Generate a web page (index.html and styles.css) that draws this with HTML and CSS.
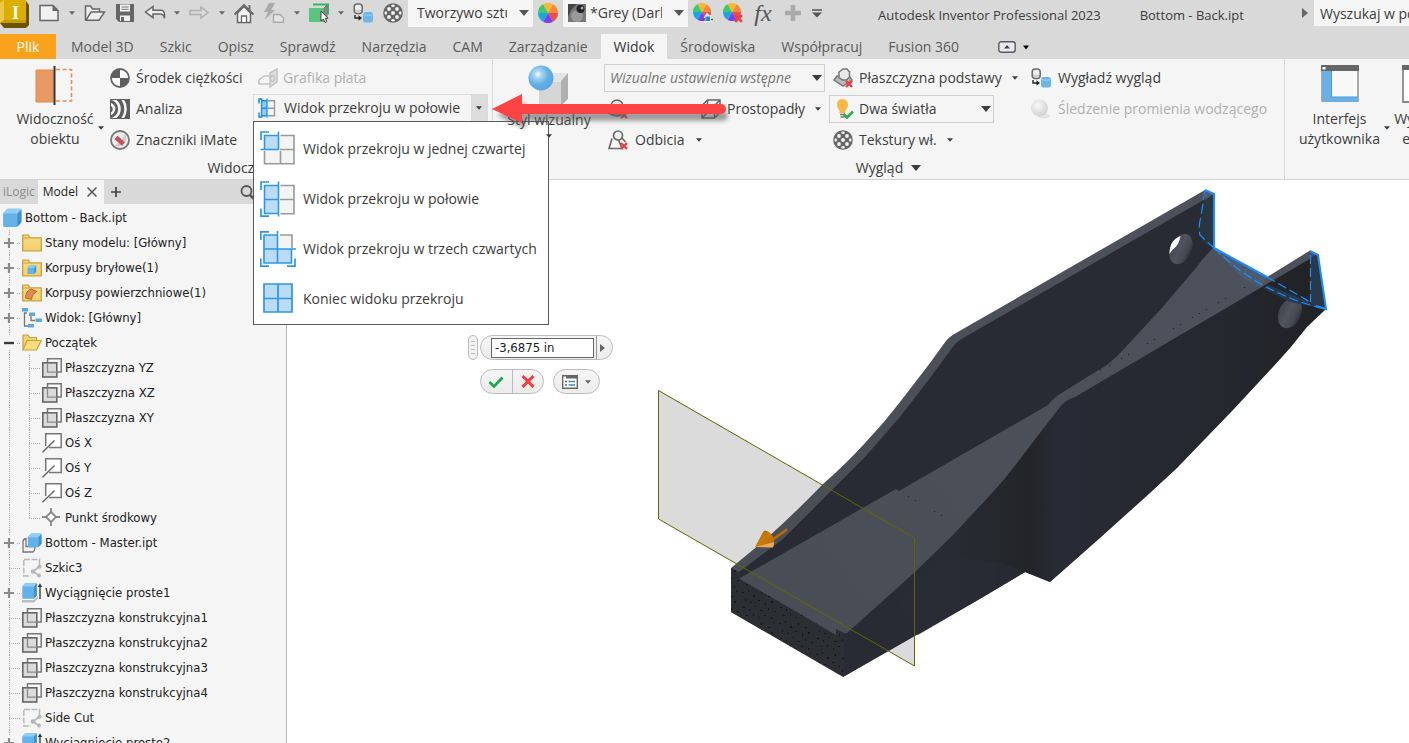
FILE: index.html
```html
<!DOCTYPE html>
<html lang="pl">
<head>
<meta charset="utf-8">
<title>Autodesk Inventor Professional 2023</title>
<link rel="stylesheet" href="styles.css">
</head>
<body>
<svg class="defs" aria-hidden="true">
  <defs>
    <radialGradient id="gBall" cx=".38" cy=".35" r=".7"><stop offset="0" stop-color="#fff"/><stop offset=".2" stop-color="#aad6f5"/><stop offset=".6" stop-color="#62afe6"/><stop offset="1" stop-color="#5aa6df"/></radialGradient>
    <radialGradient id="gGrey" cx=".4" cy=".35" r=".7"><stop offset="0" stop-color="#f8f8f8"/><stop offset="1" stop-color="#cfcfcf"/></radialGradient>
    <linearGradient id="gYel" x1="0" y1="0" x2="0" y2="1"><stop offset="0" stop-color="#f9dc86"/><stop offset="1" stop-color="#f2cf6c"/></linearGradient>
  </defs>
  <symbol id="caret" viewBox="0 0 10 6"><path d="M0 0h10L5 6z"/></symbol>
  <symbol id="redx" viewBox="0 0 8 8"><path d="M1 1l6 6M7 1L1 7" stroke="#f03c3c" stroke-width="2.4" fill="none"/></symbol>
  <symbol id="wheel" viewBox="0 0 20 20">
    <path d="M10 10L5 1.3A10 10 0 0 1 15 1.3z" fill="#fdb62f"/><path d="M10 10L15 1.3A10 10 0 0 1 20 10z" fill="#f58a3c"/>
    <path d="M10 10L20 10A10 10 0 0 1 15 18.7z" fill="#e8504d"/><path d="M10 10L15 18.7A10 10 0 0 1 5 18.7z" fill="#7a3ff2"/>
    <path d="M10 10L5 18.7A10 10 0 0 1 0 10z" fill="#18a8dc"/><path d="M10 10L0 10A10 10 0 0 1 5 1.3z" fill="#3fc870"/>
  </symbol>
  <symbol id="smooth" viewBox="0 0 20 20">
    <rect x="1.2" y="1" width="8" height="9.500" rx="3" fill="#eee" stroke="#6b6b6b" stroke-width="1.500"/><path d="M2 7c2 1.300 5 1.300 7 0" stroke="#6b6b6b" fill="none" opacity=".5"/>
    <path d="M2 12v3h5" stroke="#222" stroke-width="1.400" fill="none"/><path d="M5.500 12.300L9 15l-3.500 2.700z" fill="#222"/>
    <rect x="10" y="9" width="10" height="10.500" rx="2.500" fill="#6db5ea"/><path d="M10.500 11.500c2 1 7 1 9 0" stroke="#9fd0f5" fill="none"/>
  </symbol>
  <symbol id="texture" viewBox="0 0 20 20">
    <circle cx="10" cy="10" r="9.800" fill="#666"/>
    <g fill="#f1f1f1"><circle cx="10" cy="10" r="2"/><circle cx="6" cy="6" r="1.900"/><circle cx="14" cy="6" r="1.900"/><circle cx="6" cy="14" r="1.900"/><circle cx="14" cy="14" r="1.900"/><ellipse cx="10" cy="2.800" rx="1.800" ry="1.300"/><ellipse cx="10" cy="17.200" rx="1.800" ry="1.300"/><ellipse cx="2.800" cy="10" rx="1.300" ry="1.800"/><ellipse cx="17.200" cy="10" rx="1.300" ry="1.800"/></g>
  </symbol>
  <symbol id="folder" viewBox="0 0 20 18"><path d="M.7 16.800V1.200h5.800l1.300 2.600h11.500v13z" fill="url(#gYel)" stroke="#c9a23c" stroke-width="1.300"/><path d="M1 4h6.500" stroke="#c9a23c"/></symbol>
  <symbol id="cube" viewBox="0 0 18 18"><path d="M1 5.500Q1 4.500 1.800 4L4 1.500Q4.800.7 6 .7h10q1.500 0 1.500 1.300v10q0 1-.7 1.800L14.500 16.300q-.8.900-2 .9H2.300Q1 17.200 1 16z" fill="#62b1e8"/><path d="M1.300 4.600L4.600 1q.6-.4 1.400-.4h10.200q.9.100 1.200.8L14 5H1.200z" fill="#93cdf5"/><path d="M17.400 1.500v11L14 16.800V5z" fill="#3f8fc9"/></symbol>
  <symbol id="plane" viewBox="0 0 20 20"><path d="M5.500 5V.8h13.700V14h-4" fill="#fafafa" stroke="#777" stroke-width="1.500"/><rect x=".8" y="4.800" width="14" height="14.200" fill="#d6d6d6" fill-opacity=".85" stroke="#666" stroke-width="1.600"/><path d="M5.500 5v9.200H15" fill="none" stroke="#8a8a8a" stroke-width="1.300"/></symbol>
  <symbol id="axis" viewBox="0 0 20 20"><path d="M3.700 13V.8h15.500v13.700H7" fill="#fff" stroke="#777" stroke-width="1.500"/><path d="M.5 19.300L12.500 7.500" stroke="#666" stroke-width="1.500"/></symbol>
  <symbol id="sketch" viewBox="0 0 20 20"><path d="M1.800 2v16h7M2 1.500h15.500V7" fill="none" stroke="#b9b9b9" stroke-width="1.500" stroke-dasharray="6 1.500"/><path d="M17.500 8.500L11 13.500l6 4" fill="none" stroke="#bcbcbc" stroke-width="2"/><g fill="#b5b5b5"><circle cx="17.500" cy="8.700" r="2"/><circle cx="11" cy="13.500" r="2.300"/><circle cx="17" cy="17.500" r="2"/></g></symbol>
  <symbol id="extrude" viewBox="0 0 20 20"><path d="M0 19.500v-2.500h12l4-4v2.500l-4 4z" fill="#bdbdbd"/><path d="M.3 3.500L3 .3h11.700v12L12 15.800H.3z" fill="#62b1e8"/><path d="M.3 3.500L3 .3h11.700L12 3.500z" fill="#93cdf5"/><path d="M14.700.3v12L12 15.800V3.500z" fill="#3f8fc9"/><path d="M18 16V2" stroke="#333" stroke-width="1.300"/><path d="M15.800 4L18 .3 20.200 4z" fill="#333"/></symbol>
  <symbol id="plus" viewBox="0 0 10 10"><path d="M0 5h10M5 0v10" stroke="#8a8a8a" stroke-width="2.200"/></symbol>
  <symbol id="half" viewBox="0 0 36 36">
    <path d="M20.500 4.500H34v28.200H20.500M20 18.500h14" fill="#f4f4f4" stroke="#999" stroke-width="1.600"/><path d="M4 4.500h14.500v28H4z" fill="#bcdcf5"/>
    <path d="M18.500.5v35M4.500 4.500h14M4.500 4v28.500h14M4.500 18.500h14" fill="none" stroke="#2d97e5" stroke-width="1.600"/><path d="M1 9V1h8M1 27.500v7.700h8" fill="none" stroke="#2d97e5" stroke-width="1.700"/>
  </symbol>
</svg>

<header class="titlebar">
  <div class="logo"><svg width="30" height="29" viewBox="0 0 30 29"><path d="M0 24l4 5h22l3-3V6l-3-4z" fill="#6b5300"/><path d="M0 1h26v23H0z" fill="#dcae00"/><path d="M0 4l4-3v20l-4 3z" fill="#eac94c"/><path d="M4 21h22v3H0z" fill="#c79c00"/></svg><b>I</b></div>
  <div class="qat">
    <button class="qb" aria-label="Nowy"><svg width="22" height="20"><path d="M2 2.500h13l5 5V17.500H2z" fill="#f1f1f1" stroke="#666" stroke-width="1.500"/><path d="M14.500 2v6h6z" fill="#666"/></svg></button>
    <button class="qc w16" aria-label="Więcej"><svg class="c6"><use href="#caret"/></svg></button>
    <button class="qb" aria-label="Otwórz"><svg width="22" height="20"><path d="M1.500 17V3h5l2 3h7v4" fill="#eee" stroke="#666" stroke-width="1.500"/><path d="M2 17.200L7 9h13.500L15 17.200z" fill="#eee" stroke="#666" stroke-width="1.500"/></svg></button>
    <button class="qb" aria-label="Zapisz"><svg width="20" height="20"><path d="M1 1h18v18H4l-3-3z" fill="#666"/><path d="M5 1.500h10v7H5z" fill="#f0f0f0"/><path d="M6.500 4h7M6.500 6.300h7" stroke="#777"/><path d="M5 12.500h10V18H5z" fill="#f0f0f0"/><path d="M6 14h3v4H6z" fill="#666"/></svg></button>
    <button class="qb" aria-label="Cofnij"><svg width="22" height="16"><path d="M1.500 7l7.500-5.500v3.700h8q3.500 0 3.500 5v3q-1-4-4-4.200H9v3.700z" fill="#eee" stroke="#666" stroke-width="1.500"/></svg></button>
    <button class="qc w14" aria-label="Więcej"><svg class="c6"><use href="#caret"/></svg></button>
    <button class="qb" aria-label="Ponów"><svg width="22" height="16"><path d="M20 7.500L13 2v3.500H2v4h11V13z" fill="none" stroke="#b0b0b0" stroke-width="1.500"/></svg></button>
    <button class="qc w15" aria-label="Więcej"><svg class="c6"><use href="#caret"/></svg></button>
    <button class="qb" aria-label="Strona główna"><svg width="22" height="21"><path d="M4.500 10v9.500h13V10L11 3.500z" fill="#f1f1f1" stroke="#666" stroke-width="1.500"/><path d="M1.500 11.500L11 2l9.500 9.500M16.500 2v5" fill="none" stroke="#666" stroke-width="1.800"/><path d="M8.500 19v-6h5v6" fill="#fff" stroke="#666" stroke-width="1.300"/></svg></button>
    <button class="qb" aria-label="Aktualizuj"><svg width="22" height="20"><path d="M6 0L1 9h4L1.500 17 12 7H8l4-7z" fill="#aaa"/><path d="M10.500 11.500h6.500l3.500 3.500v4.300h-10z" fill="#e4e4e4" stroke="#aaa" stroke-width="1.400"/></svg></button>
    <button class="qc w15" aria-label="Więcej"><svg class="c6"><use href="#caret"/></svg></button>
    <button class="qb" aria-label="Wybierz"><svg width="22" height="20"><path d="M1 5h15v14H1z" fill="#5bc57e"/><path d="M5 1.500h15v10" fill="none" stroke="#32b75c" stroke-width="2"/><path d="M16 5l3-3v13l-3 4z" fill="#8b8b8b" stroke="#777"/><path d="M13 8v10l2.500-2 1.500 3.500 1.800-.8-1.500-3.400H20z" fill="#fff" stroke="#444"/></svg></button>
    <button class="qc w14" aria-label="Więcej"><svg class="c6"><use href="#caret"/></svg></button>
    <button class="qb" aria-label="Wygładź"><svg width="20" height="20"><use href="#smooth"/></svg></button>
    <button class="qb" aria-label="Tekstury"><svg width="20" height="20"><use href="#texture"/></svg></button>
  </div>
  <div class="combo top"><select aria-label="Materiał"><option>Tworzywo sztuczne</option></select><svg class="c10"><use href="#caret"/></svg></div>
  <button class="qb" aria-label="Kolory"><svg width="20" height="20"><use href="#wheel"/></svg></button>
  <div class="combo top"><svg class="swatch" width="18" height="18"><path d="M0 0h18v18H0z" fill="#777"/><path d="M0 0h9L3 6 0 13z" fill="#444"/><circle cx="9" cy="12" r="6" fill="#999"/><circle cx="12.500" cy="5" r="4" fill="#222"/><circle cx="14" cy="4" r="1.500" fill="#aaa"/></svg><select aria-label="Wygląd"><option>*Grey (Dark)</option></select><svg class="c10"><use href="#caret"/></svg></div>
  <button class="qb" aria-label="Dopasuj"><svg width="20" height="20"><use href="#wheel" width="18" height="18"/><path d="M14 9.500l2.500 3H18v2h2v3h-2v2h-6v-4.500h-1.500z" fill="#eee"/><path d="M12.500 13.500h4.500v4.500h-4.500z" fill="#1d87d8"/><path d="M18 16.500h2M9 16.500h2" stroke="#555" stroke-width="1.500"/></svg></button>
  <button class="qb" aria-label="Wyczyść"><svg width="20" height="20"><use href="#wheel" width="18" height="18"/><use href="#redx" x="11" y="11" width="9" height="9"/></svg></button>
  <button class="qb fx" aria-label="Parametry">fx</button>
  <button class="qb" aria-label="Dodaj"><svg width="16" height="16"><path d="M8 0v16M0 8h16" stroke="#aaa" stroke-width="4.500"/></svg></button>
  <button class="qc w18" aria-label="Dostosuj"><svg width="10" height="9"><path d="M0 1h10" stroke="#555" stroke-width="1.500"/><path d="M0 3.500h10l-5 5z" fill="#555"/></svg></button>
  <h1 class="apptitle"><span>Autodesk Inventor Professional 2023</span><span>Bottom - Back.ipt</span></h1>
  <svg class="tri" width="6" height="10"><path d="M0 0v10l6-5z" fill="#666"/></svg>
  <input class="search" type="text" aria-label="Wyszukaj" value="Wyszukaj w pomocy">
</header>

<nav class="tabs">
  <button class="tab file">Plik</button><button class="tab">Model 3D</button><button class="tab">Szkic</button><button class="tab">Opisz</button><button class="tab">Sprawdź</button><button class="tab">Narzędzia</button><button class="tab">CAM</button><button class="tab">Zarządzanie</button><button class="tab on">Widok</button><button class="tab">Środowiska</button><button class="tab">Współpracuj</button><button class="tab">Fusion 360</button>
  <button class="mini" aria-label="Minimalizuj wstążkę"><svg width="32" height="12"><rect x=".8" y=".8" width="16.400" height="10.400" rx="2.500" fill="#e9e9ee" stroke="#555b6b" stroke-width="1.400"/><path d="M6 7.500h6L9 4z" fill="#444"/><path d="M25 4.500h6L28 8.500z" fill="#000"/></svg></button>
</nav>

<section class="ribbon">
  <div class="group g1">
    <div class="cols">
      <button class="big vis"><svg width="40" height="41"><path d="M1 5h17v32H1z" fill="#e89a64" stroke="#de8a50" stroke-width="1"/><path d="M21 4.500h15.500v31.500H21" fill="none" stroke="#e58e52" stroke-width="1.600" stroke-dasharray="4 2.500"/><path d="M19.500 1v39" stroke="#333" stroke-width="2"/></svg><span>Widoczność<br>obiektu</span><svg class="c6 side"><use href="#caret"/></svg></button>
      <div class="col c-a">
        <button class="row"><svg width="20" height="20"><circle cx="10" cy="10" r="9" fill="#fafafa" stroke="#666" stroke-width="1.800"/><path d="M10 10V1a9 9 0 0 0-9 9zM10 10v9a9 9 0 0 0 9-9z" fill="#5e5e5e"/></svg><span>Środek ciężkości</span></button>
        <button class="row"><svg width="20" height="20"><path d="M0 0h20v20H0z" fill="#5e5e5e"/><g fill="none" stroke="#f4f4f4" stroke-width="2.600"><circle cx="-1" cy="10" r="5"/><circle cx="-1" cy="10" r="10.500"/><circle cx="-1" cy="10" r="16.500"/></g><path d="M.5.5h19v19H.5z" fill="none" stroke="#5e5e5e"/></svg><span>Analiza</span></button>
        <button class="row"><svg width="20" height="20"><circle cx="10" cy="10" r="9" fill="#ececec" stroke="#777" stroke-width="1.800"/><path d="M15 3.500a8.500 8.500 0 0 1-11 12q7-2 11-12z" fill="#ccc"/><path d="M6 7.500L13.500 14" stroke="#c4504f" stroke-width="4.500"/></svg><span>Znaczniki iMate</span></button>
      </div>
      <div class="col c-b">
        <button class="row off pad" disabled><svg width="20" height="20"><path d="M12 5l7-4v13l-7 5z" fill="#ddd" stroke="#c3c3c3" stroke-width="1.500"/><path d="M12 8H6L1 12v4h11" fill="none" stroke="#c3c3c3" stroke-width="1.600"/><ellipse cx="14.500" cy="10.500" rx="2" ry="3" fill="none" stroke="#c3c3c3" stroke-width="1.300"/></svg><span>Grafika płata</span></button>
        <div class="splitwrap">
          <div class="split"><button class="main"><svg width="18" height="20" viewBox="0 0 36 36" preserveAspectRatio="none"><path d="M20 5h13v27H20M20 18.500h13" fill="#f4f4f4" stroke="#999" stroke-width="2.600"/><path d="M6 5h12v27H6z" fill="#8fc9f3"/><path d="M18 1v34M7 5v27M6 5h12M6 32h12M6 18.500h12" stroke="#1f8fe3" stroke-width="2.600"/><path d="M2 10V2h7M2 26v8h7" fill="none" stroke="#1f8fe3" stroke-width="3"/></svg><span>Widok przekroju w połowie</span></button><button class="drop" aria-label="Rozwiń"><svg class="c6"><use href="#caret"/></svg></button></div>
          <ul class="menu">
            <li><button><svg width="36" height="36"><path d="M20.500 4.500H34v28.200H4.500V20M20 18.500h14M20.500 20v12.500" fill="#f4f4f4" stroke="#999" stroke-width="1.600"/><path d="M4 5h15v14H4z" fill="#bcdcf5"/><path d="M18.500.5v18.500M.5 18.500h18M4.500 18.500V4.500h14" fill="none" stroke="#2d97e5" stroke-width="1.600"/><path d="M1 9V1h8" fill="none" stroke="#2d97e5" stroke-width="1.700"/></svg><span>Widok przekroju w jednej czwartej</span></button></li>
            <li><button><svg width="36" height="36"><use href="#half"/></svg><span>Widok przekroju w połowie</span></button></li>
            <li><button><svg width="36" height="36"><path d="M20 4h12v14H20z" fill="#f4f4f4"/><path d="M20 4h12v13" fill="none" stroke="#999" stroke-width="1.600"/><path d="M3.500 4H18v14h14v14H3.500z" fill="#bcdcf5"/><path d="M17.500 0v32M3.500 4H18M3.500 18H36M4 4v28h27.500V18.500" fill="none" stroke="#2d97e5" stroke-width="1.600"/><path d="M.8 9V.8H9M.8 27.500v7.700H9M35 27.500v7.700h-8" fill="none" stroke="#2d97e5" stroke-width="1.700"/></svg><span>Widok przekroju w trzech czwartych</span></button></li>
            <li><button><svg width="36" height="36"><path d="M4 3h28v28H4zM18 3v28M4 17.500h28" fill="#bcdcf5" stroke="#2d97e5" stroke-width="1.700"/></svg><span>Koniec widoku przekroju</span></button></li>
          </ul>
        </div>
      </div>
    </div>
    <div class="gtitle">Widoczność</div>
  </div>
  <div class="group g2">
    <div class="cols">
      <button class="big sty"><svg width="42" height="41"><path d="M11 18l8-3h15l-7 5v21H11z" fill="#d8d8d8"/><path d="M11 17h23v24H11z" fill="#d6d6d6"/><path d="M11 17l9-9h20l-7 9z" fill="#e4e4e4"/><path d="M33 16l7-8v26l-7 7z" fill="#b0b0b0"/><circle cx="13" cy="13" r="12.500" fill="url(#gBall)"/></svg><span>Styl wizualny</span><svg class="c6"><use href="#caret"/></svg></button>
      <div class="col c-c">
        <div class="cell"><div class="combo box ital"><select aria-label="Wizualne ustawienia wstępne"><option>Wizualne ustawienia wstępne</option></select><svg class="c10"><use href="#caret"/></svg></div></div>
        <div class="pair">
          <button class="row"><svg width="20" height="20"><circle cx="9" cy="7" r="6" fill="#e8e8e8" stroke="#666" stroke-width="1.600"/><path d="M1 14q8 5 12 1" stroke="#777" stroke-width="2.500" fill="none"/><use href="#redx" x="12" y="12" width="8" height="8"/></svg><span>Cienie</span></button>
          <button class="row"><svg width="20" height="20"><path d="M1 6.500L6.500 1H19v12.500L13.500 19H1zM1 6.500h12.500V19M13.500 6.500L19 1M6.500 1v12.500L1 19M6.500 13.500H19" fill="none" stroke="#666" stroke-width="1.500"/></svg><span>Prostopadły</span><svg class="c6"><use href="#caret"/></svg></button>
        </div>
        <button class="row odb"><svg width="20" height="20"><path d="M4 8.500L1 18.500h13l-4-10" fill="none" stroke="#6b6b6b" stroke-width="1.700"/><path d="M14 8l3.500 4" stroke="#6b6b6b" stroke-width="1.700"/><circle cx="10" cy="5.500" r="4.500" fill="#f1f1f1" stroke="#6b6b6b" stroke-width="1.700"/><use href="#redx" x="12" y="12" width="8" height="8"/></svg><span>Odbicia</span><svg class="c6"><use href="#caret"/></svg></button>
      </div>
      <div class="col c-d">
        <button class="row"><svg width="20" height="20"><path d="M1 12l3-4h12l3 4-9 6z" fill="#bbb" stroke="#777" stroke-width="1.500"/><path d="M10 1h4l2.500 3v5l-3 3h-4L6 9.500V4z" fill="#e9e9e9" stroke="#777" stroke-width="1.500"/><use href="#redx" x="12" y="12" width="8" height="8"/></svg><span>Płaszczyzna podstawy</span><svg class="c6"><use href="#caret"/></svg></button>
        <div class="cell"><div class="combo box light"><svg width="20" height="20"><path d="M7 0q6 0 6 6 0 3-2.500 5.500V14h-6v-2.500Q2 9 2 6q0-6 5-6z" fill="#f8b947"/><path d="M5 15.500h5M5.500 18h4" stroke="#777" stroke-width="1.700"/><path d="M8.500 15l3.500 3.500 6-6" stroke="#27ae4f" stroke-width="2.600" fill="none"/></svg><select aria-label="Światła"><option>Dwa światła</option></select><svg class="c10"><use href="#caret"/></svg></div></div>
        <button class="row"><svg width="20" height="20"><use href="#texture"/></svg><span>Tekstury wł.</span><svg class="c6"><use href="#caret"/></svg></button>
      </div>
      <div class="col c-e">
        <button class="row"><svg width="20" height="20"><use href="#smooth"/></svg><span>Wygładź wygląd</span></button>
        <button class="row off" disabled><svg width="20" height="20"><ellipse cx="13" cy="17" rx="6" ry="2.500" fill="#e2e2e2"/><circle cx="8.500" cy="9" r="8.500" fill="url(#gGrey)"/></svg><span>Śledzenie promienia wodzącego</span></button>
      </div>
    </div>
    <button class="gtitle">Wygląd <svg class="c10"><use href="#caret"/></svg></button>
  </div>
  <div class="group g3">
    <div class="cols">
      <button class="big ui"><svg width="38" height="38"><path d="M1 1h36v35H1z" fill="#f8f8f8" stroke="#999" stroke-width="1.600"/><path d="M0 0h38v6H0z" fill="#666"/><path d="M1.500 2h3v2.500h-3z" fill="#fff"/><path d="M1 6h9.500v26H37v5H1z" fill="#6ab0e6"/><path d="M10.500 6v26H37" fill="none" stroke="#4d9ad6"/></svg><span>Interfejs<br>użytkownika</span><svg class="c6 side"><use href="#caret"/></svg></button>
      <button class="big cut"><svg width="38" height="38"><path d="M1 1h36v36H1z" fill="#fff" stroke="#888" stroke-width="1.800"/><path d="M0 0h38v5H0z" fill="#666"/></svg><span>Wyczyść<br>ekran</span></button>
    </div>
  </div>
  <svg class="redarrow" width="240" height="44" viewBox="0 0 240 44" aria-hidden="true"><path d="M4 20L32 7v9h199q3 0 4 5 0 3-4 5H32v8z" fill="#555" opacity=".55" transform="translate(2 3)" class="soft"/><path d="M1 17L31 2v10h199a5 5 0 0 1 0 10H31v9z" fill="#fd4343"/></svg>
</section>

<main class="work">
  <aside class="panel">
    <div class="ptabs"><button class="pt">iLogic</button><div class="pt on"><button>Model</button><button aria-label="Zamknij"><svg width="10" height="10"><path d="M.5.5l9 9M9.500.5l-9 9" stroke="#555" stroke-width="1.500"/></svg></button></div><button class="add" aria-label="Dodaj panel"><svg width="10" height="10"><path d="M5 0v10M0 5h10" stroke="#444" stroke-width="1.700"/></svg></button><span class="fill"></span><button class="find" aria-label="Szukaj"><svg width="16" height="16"><circle cx="6.500" cy="7" r="5" fill="none" stroke="#555" stroke-width="1.800"/><path d="M10 11l4 4" stroke="#555" stroke-width="2.500"/></svg></button></div>
    <ul class="tree">
      <li class="root"><svg width="20" height="20"><use href="#cube"/></svg><span>Bottom - Back.ipt</span></li>
      <li><i class="g"><svg><use href="#plus"/></svg></i><svg width="20" height="18"><use href="#folder"/></svg><span>Stany modelu: [Główny]</span></li>
      <li><i class="g"><svg><use href="#plus"/></svg></i><svg width="20" height="18"><use href="#folder"/><use href="#cube" x="5" y="6" width="9.500" height="9.500"/></svg><span>Korpusy bryłowe(1)</span></li>
      <li><i class="g"><svg><use href="#plus"/></svg></i><svg width="20" height="18"><use href="#folder"/><path d="M3.500 14q0-7 5.500-9l6 2.500q-5 2.500-5.500 8z" fill="#e08a52" stroke="#bd6b36"/></svg><span>Korpusy powierzchniowe(1)</span></li>
      <li><i class="g"><svg><use href="#plus"/></svg></i><svg width="20" height="20"><path d="M5 5H2.500v13H6M9 8v4.500h4" fill="none" stroke="#777" stroke-width="1.300"/><path d="M0 0h6v3.500H0zM7 4.500h6V8H7zM13.500 10.500H20V14h-6.500zM6 16h6v3.500H6z" fill="#5aa9e2"/></svg><span>Widok: [Główny]</span></li>
      <li><i class="g"><svg viewBox="0 0 10 10"><path d="M0 5h10" stroke="#3a3a3a" stroke-width="2.400"/></svg></i><svg width="20" height="18"><path d="M1 15.500V1h5l1.500 2.500h7V7" fill="#f4d377" stroke="#c9a23c" stroke-width="1.200"/><path d="M1 16L5 6.500h14.300L14.500 16z" fill="#f8dc80" stroke="#c9a23c" stroke-width="1.200"/></svg><span>Początek</span></li>
      <li><i class="v"></i><i class="b"></i><svg width="20" height="20"><use href="#plane"/></svg><span>Płaszczyzna YZ</span></li>
      <li><i class="v"></i><i class="b"></i><svg width="20" height="20"><use href="#plane"/></svg><span>Płaszczyzna XZ</span></li>
      <li><i class="v"></i><i class="b"></i><svg width="20" height="20"><use href="#plane"/></svg><span>Płaszczyzna XY</span></li>
      <li><i class="v"></i><i class="b"></i><svg width="20" height="20"><use href="#axis"/></svg><span>Oś X</span></li>
      <li><i class="v"></i><i class="b"></i><svg width="20" height="20"><use href="#axis"/></svg><span>Oś Y</span></li>
      <li><i class="v"></i><i class="b"></i><svg width="20" height="20"><use href="#axis"/></svg><span>Oś Z</span></li>
      <li><i class="v"></i><i class="b last"></i><svg width="20" height="20"><path d="M9 4l5 5-5 5-5-5z" fill="#fff" stroke="#888" stroke-width="1.800"/><path d="M9 0v4M9 14v4M0 9h4M14 9h4" stroke="#888" stroke-width="1.800"/></svg><span>Punkt środkowy</span></li>
      <li><i class="g"><svg><use href="#plus"/></svg></i><svg width="20" height="20"><path d="M1 9q0-3 3-3.500v8h9q0 4-2 5.500H1z" fill="#f1f1f1" stroke="#777" stroke-width="1.300"/><use href="#cube" x="5" y="0" width="15" height="15"/></svg><span>Bottom - Master.ipt</span></li>
      <li><i class="b"></i><svg width="20" height="20"><use href="#sketch"/></svg><span>Szkic3</span></li>
      <li><i class="g"><svg><use href="#plus"/></svg></i><svg width="20" height="20"><use href="#extrude"/></svg><span>Wyciągnięcie proste1</span></li>
      <li><i class="b"></i><svg width="20" height="20"><use href="#plane"/></svg><span>Płaszczyzna konstrukcyjna1</span></li>
      <li><i class="b"></i><svg width="20" height="20"><use href="#plane"/></svg><span>Płaszczyzna konstrukcyjna2</span></li>
      <li><i class="b"></i><svg width="20" height="20"><use href="#plane"/></svg><span>Płaszczyzna konstrukcyjna3</span></li>
      <li><i class="b"></i><svg width="20" height="20"><use href="#plane"/></svg><span>Płaszczyzna konstrukcyjna4</span></li>
      <li><i class="b"></i><svg width="20" height="20"><use href="#sketch"/></svg><span>Side Cut</span></li>
      <li><i class="g"><svg><use href="#plus"/></svg></i><svg width="20" height="20"><use href="#extrude"/></svg><span>Wyciągnięcie proste2</span></li>
    </ul>
  </aside>

  <div class="canvas">
    <svg class="model" viewBox="287 180 1122 563" preserveAspectRatio="xMinYMin meet" role="img" aria-label="Model 3D">
      <defs>
        <linearGradient id="mOut" gradientUnits="userSpaceOnUse" x1="850" y1="0" x2="1326" y2="0"><stop offset="0" stop-color="#282b34"/><stop offset=".22" stop-color="#282b33"/><stop offset=".38" stop-color="#222427"/><stop offset=".405" stop-color="#25282f"/><stop offset=".44" stop-color="#282b35"/><stop offset=".8" stop-color="#25272f"/><stop offset="1" stop-color="#202225"/></linearGradient>
        <linearGradient id="mTop" gradientUnits="userSpaceOnUse" x1="740" y1="600" x2="1200" y2="240"><stop offset="0" stop-color="#494d55"/><stop offset="1" stop-color="#4d515b"/></linearGradient>
        <linearGradient id="mHole" x1="0" y1="0" x2="1" y2="0"><stop offset="0" stop-color="#43464f"/><stop offset=".45" stop-color="#50545e"/><stop offset=".8" stop-color="#444750"/><stop offset="1" stop-color="#2e3138"/></linearGradient>
        <linearGradient id="mCone" x1="0" y1="0" x2="1" y2="1"><stop offset="0" stop-color="#a86400"/><stop offset=".5" stop-color="#c97c0a"/><stop offset="1" stop-color="#a86400"/></linearGradient>
        <pattern id="speck" width="37" height="31" patternUnits="userSpaceOnUse"><path fill="#16181b" d="M2 3h2v1H2zM8 1h1v2H8zM13 6h2v2h-2zM21 3h1v2h-1zM28 7h2v1h-2zM33 2h1v1h-1zM5 10h1v2H5zM10 13h2v1h-2zM18 11h2v1h-2zM25 14h1v2h-1zM31 12h2v2h-2zM3 18h2v1H3zM9 20h1v2H9zM15 17h1v1h-1zM20 21h3v1h-3zM28 19h1v2h-1zM34 22h2v1h-2zM6 26h2v1H6zM13 25h1v2h-1zM19 28h1v1h-1zM24 26h2v1h-2zM31 28h1v2h-1z"/><path d="M11 8h1v1h-1zM23 9h2v1h-2zM16 22h1v2h-1z" fill="#34360d"/></pattern>
      </defs>
      <path d="M658.500 390L914.500 538v128.500L658.500 519z" fill="#dbdbdb"/>
      <path d="M731 568L766 539Q797 511 823 484 846 464 865 443 884 423 900 402L930 363 943 345Q948 337 956 333L1205 190l9 4v54l53 29 43-26.500 8 3.500-140 213-128 115-25-10L843 677 731 612z" fill="url(#mTop)"/>
      <path d="M739 572L783 539 808 514 865 457 900 417 930 378 952 348Q957 341 965 337L1214 194v53Q1203 258 1196 268L1160 310 1122 351Q1108 366 1097 371L1063 392Q1053 398 1048 405L899 491l-3-2L740 578z" fill="#282b33"/>
      <path d="M1318 254l8 55L1307 327Q1291 348 1273 367L1233 410 1178 467 1150 493 1100 538Q1074 561 1050 582L1025 572 978 600 843 677v-44h4L915 572 953 535 992 493Q1005 479 1017 463L1046 425 1060 407Q1065 400 1075 397z" fill="url(#mOut)"/>
      <path d="M938 558q50-3 87 14l-47 28-60 35-20-35z" fill="#292c36" opacity=".8"/>
      <path d="M731 568l8 4 1 7 96 56v-6l8 4v44L731 612z" fill="#2b2e32"/>
      <path d="M731 568l8 4 1 7 96 56v-6l8 4v44L731 612z" fill="url(#speck)"/>
      <path fill="#202329" d="M908 496h1v1h-1zM915 500h1v1h-1zM934 511h1v1h-1zM941 515h1v1h-1zM1100 370h1v1h-1zM1109 365h1v1h-1zM1121 358h1v1h-1zM1128 354h1v1h-1zM1147 343h1v1h-1zM1154 339h1v1h-1zM1173 328h1v1h-1zM1180 324h1v1h-1zM1192 317h1v1h-1zM1199 313h1v1h-1zM1206 309h1v1h-1zM1218 302h1v1h-1zM1225 298h1v1h-1zM1244 287h1v1h-1z"/>
      <g transform="rotate(25 1181 249)"><ellipse cx="1181" cy="249" rx="10.500" ry="16" fill="url(#mHole)"/></g>
      <path d="M1169.500 254q0-14 11-18-1 7-5 11-4 3-6 7z" fill="#fff"/>
      <g transform="rotate(25 1290 313)"><ellipse cx="1290" cy="313" rx="11" ry="16" fill="url(#mHole)"/></g>
      <path d="M1205 190l9 4v54q-12-3-15-13 0-18 6-45z" fill="#2a3542"/>
      <path d="M1310 258l8-4 8 55-36-7-27-14 6-3 41 17z" fill="#27394b"/>
      <path d="M1214 248l53 29-6 10-17-8z" fill="#4a6585" opacity=".55"/>
      <path d="M1205 190l9 4-9 6z" fill="#565b66"/>
      <g fill="none" stroke="#1e8cff">
        <path d="M1205 190l9 4v54l53 29M1310 251l8 4 8 54-10-3" stroke-width="2"/>
        <path d="M1205 190l-4 26q-3 12-1 19l14 13" stroke-width="1.200" stroke-dasharray="10 4"/>
        <path d="M1214 248q30 30 69 47 20 9 43 14M1267 277l43 25M1310.500 255v47" stroke-width="1.200" stroke-dasharray="9 4"/>
      </g>
      <path d="M658.500 390.500L914.500 538v128L658.500 519z" fill="none" stroke="#666600"/>
      <path d="M771 539l16-11v3l-14 10z" fill="#b76d00"/>
      <path d="M755 547L762 534q2-5 5-3 5 2 7 9 1 5-1 7z" fill="url(#mCone)"/>
      <path d="M755 547l19-5q0 4-1 5.500z" fill="#e8a95c"/>
    </svg>
    <div class="hud">
      <div class="hrow"><span class="grip"></span><div class="pill val"><input type="text" aria-label="Odsunięcie" value="-3,6875 in"><button aria-label="Więcej"><svg width="5" height="8"><path d="M0 0v8l5-4z" fill="#666"/></svg></button></div></div>
      <div class="hrow second"><div class="pill ok"><button aria-label="OK"><svg width="16" height="12"><path d="M1.500 6l4.500 4.500L14.500 1.500" fill="none" stroke="#1fa94c" stroke-width="2.800"/></svg></button><button aria-label="Anuluj"><svg width="14" height="13"><path d="M1.500 1l11 11M12.500 1l-11 11" stroke="#f23b3b" stroke-width="3"/></svg></button></div><button class="pill opt" aria-label="Opcje"><svg width="16" height="14"><path d="M.7.700h14.600v12.600H.7z" fill="#fff" stroke="#666" stroke-width="1.400"/><path d="M4 0h12v3.500H4z" fill="#666"/><path d="M3 6.500h2M3 10h2" stroke="#666" stroke-width="1.500"/><path d="M6.500 6.500H13M6.500 10H13" stroke="#2d8fd8" stroke-width="1.300"/></svg><svg class="c6"><use href="#caret"/></svg></button></div>
    </div>
  </div>
</main>
</body>
</html>
```
FILE: styles.css
```css
* { box-sizing: border-box; }
html, body { height: 100%; }
body { margin: 0; display: flex; flex-direction: column; overflow: hidden; background: #fff; font: 14px/20px "Open Sans", "Noto Sans", sans-serif; color: #3c3c3c; }
button, input, select { font: inherit; color: inherit; background: none; border: 0; padding: 0; margin: 0; border-radius: 0; outline: 0; }
select { appearance: none; cursor: pointer; }
ul { list-style: none; margin: 0; padding: 0; }
svg { flex: none; display: block; }
.defs { position: absolute; width: 0; height: 0; }
.c6 { width: 6px; height: 4px; fill: #3c3c3c; }
.c10 { width: 10px; height: 6px; fill: #3c3c3c; }

.titlebar { display: flex; align-items: center; height: 34px; padding-bottom: 8px; background: #d9d9d9; flex: none; overflow: hidden; }
.logo { display: grid; width: 34px; flex: none; }
.logo > * { grid-area: 1 / 1; }
.logo b { color: #fff; font: bold 18px/28px "Liberation Serif", serif; padding-left: 12px; }
.qat { display: flex; flex: none; align-items: center; }
.qb { width: 30px; height: 26px; display: flex; align-items: center; justify-content: center; flex: none; }
.qc { height: 26px; display: flex; align-items: center; justify-content: center; flex: none; }
.qc .c6 { fill: #666; }
.w14 { width: 14px; } .w15 { width: 15px; } .w16 { width: 16px; } .w18 { width: 18px; }
.fx { font: italic 24px/24px "Liberation Serif", serif; color: #555; }
.combo { display: flex; align-items: center; position: relative; background: #f5f5f5; }
.combo select { flex: 1; min-width: 0; width: 0; overflow: hidden; white-space: nowrap; }
.top { width: 125px; height: 28px; flex: none; padding: 0 4px 0 9px; }
.top select { margin-right: 12px; height: 28px; }
.top .c10 { fill: #555; }
.top .swatch { margin: 0 4px 0 -4px; }
.apptitle { flex: 1; display: flex; justify-content: center; gap: 39px; margin: 0; font-size: 13px; font-weight: 400; white-space: nowrap; padding-top: 4px; }
.tri { margin: 0 6px; }
.search { width: 95px; height: 26px; background: #f5f5f5; padding-left: 6px; flex: none; }

.tabs { display: flex; height: 25px; background: #d9d9d9; flex: none; }
.tab { padding: 0 13px; color: #5a5a5a; white-space: nowrap; }
.tab.file { width: 56px; background: #faa21b; color: #fff; padding: 0; margin-right: 2px; }
.tab.on { background: #f5f5f5; color: #333; }
.mini { margin-left: 26px; }

.ribbon { position: relative; z-index: 2; display: flex; flex: none; height: 121px; background: #f5f5f5; border-bottom: 1px solid #d2d2d2; }
.group { display: flex; flex-direction: column; padding-top: 3px; flex: none; }
.g1 { width: 493px; border-right: 1px solid #d9d9d9; }
.g2 { width: 792px; border-right: 1px solid #d9d9d9; }
.g3 { flex: 1; min-width: 0; overflow: hidden; }
.cols { display: flex; height: 93px; }
.gtitle { height: 24px; padding-top: 2px; display: flex; align-items: center; justify-content: center; gap: 8px; }
.col { display: flex; flex-direction: column; flex: none; }
.row { height: 31px; display: flex; align-items: center; gap: 6px; white-space: nowrap; }
.off { color: #b0b0b0; }
.big { position: relative; display: flex; flex-direction: column; align-items: center; text-align: center; flex: none; padding-top: 3px; gap: 3px; white-space: nowrap; }
.big .side { position: absolute; right: 0; top: 64px; }
.vis { width: 104px; padding-left: 6px; }
.c-a { margin-left: 6px; width: 143px; }
.c-b { width: 235px; }
.pad { padding-left: 5px; gap: 5px; }
.splitwrap { position: relative; height: 31px; padding: 1px 0 2px; }
.split { display: flex; height: 28px; border: 1px solid #dadada; }
.split .main { flex: 1; display: flex; align-items: center; gap: 8px; padding-left: 4px; white-space: nowrap; min-width: 0; }
.split .drop { width: 16px; background: #dcdcdc; display: flex; align-items: center; justify-content: center; }
.menu { position: absolute; left: 0; top: 28px; width: 296px; background: #fff; border: 1px solid #5a5a5a; padding: 2px 0 0; }
.menu button { width: 100%; height: 50px; display: flex; align-items: center; gap: 7px; padding-left: 6px; white-space: nowrap; }

.sty { width: 98px; padding-left: 14px; gap: 4px; }
.c-c { margin-left: 13px; width: 225px; }
.cell { height: 31px; display: flex; align-items: center; }
.box { height: 28px; border: 1px solid #cfcfcf; padding: 0 2px 0 5px; }
.ital { width: 221px; font-style: italic; color: #777; }
.pair { display: flex; }
.pair .row:first-child { width: 97px; padding-left: 4px; gap: 7px; }
.pair .row .c6, .odb .c6, .c-d .row .c6 { margin-left: 4px; }
.odb { padding-left: 4px; gap: 7px; }
.c-d { width: 202px; }
.c-d .row { padding-left: 4px; }
.light { width: 165px; }
.light select { margin-left: 4px; }
.c-e .row { gap: 7px; }
.ui { width: 105px; padding-left: 4px; gap: 6px; }
.cut { width: 62px; gap: 6px; }
.redarrow { position: absolute; left: 491px; top: 33px; pointer-events: none; }
.soft { filter: blur(2px); }

.work { flex: 1; display: flex; min-height: 0; }
.panel { width: 287px; flex: none; background: #f5f5f5; border-right: 1px solid #b5b5b5; overflow: hidden; font: 13px/16px "DejaVu Sans Condensed", "Noto Sans", sans-serif; color: #222; }
.ptabs { display: flex; height: 24px; background: #d9d9d9; font: 12px/18px "Open Sans", sans-serif; }
.pt { display: flex; align-items: center; padding: 0 3px; color: #8a8a8a; }
.pt.on { background: #f5f5f5; color: #222; gap: 9px; padding: 0 7px 0 5px; }
.pt svg, .add svg { margin: auto; }
.add { width: 24px; }
.fill { flex: 1; }
.find { width: 46px; }
.tree { padding-top: 1px; }
.tree li { height: 25px; display: flex; align-items: center; white-space: nowrap; }
.tree li > svg { margin: 0 3px 0 2px; }
.tree i { width: 20px; height: 25px; display: flex; align-items: center; flex: none; }
.tree i svg { width: 10px; height: 10px; margin-left: 4px; }
.v { background: repeating-linear-gradient(#aaa 0 1px, transparent 1px 2px) 9px 0 / 1px 100% no-repeat; }
.b { background: repeating-linear-gradient(#aaa 0 1px, transparent 1px 2px) 9px 0 / 1px 100% no-repeat, repeating-linear-gradient(90deg, #aaa 0 1px, transparent 1px 2px) 9px 13px / 11px 1px no-repeat; }
.b.last { background: repeating-linear-gradient(#aaa 0 1px, transparent 1px 2px) 9px 0 / 1px 13px no-repeat, repeating-linear-gradient(90deg, #aaa 0 1px, transparent 1px 2px) 9px 13px / 11px 1px no-repeat; }
.g { background: repeating-linear-gradient(#aaa 0 1px, transparent 1px 2px) 9px 0 / 1px 6px no-repeat, repeating-linear-gradient(#aaa 0 1px, transparent 1px 2px) 9px 20px / 1px 5px no-repeat, repeating-linear-gradient(90deg, #aaa 0 1px, transparent 1px 2px) 17px 13px / 3px 1px no-repeat; }

.canvas { position: relative; flex: 1; min-width: 0; overflow: hidden; background: #fff; }
.model { width: 100%; height: 100%; }
.hud { position: absolute; left: 181px; top: 155px; font: 13px/16px "DejaVu Sans Condensed", "Noto Sans", sans-serif; color: #222; }
.hrow { display: flex; gap: 2px; }
.second { margin-top: 9px; padding-left: 12px; gap: 9px; }
.grip { width: 10px; height: 25px; border: 1px solid #b8b8b8; border-radius: 5px; background: repeating-linear-gradient(#bbb 0 1px, #f2f2f2 1px 4px) 2px 5px / 4px 15px no-repeat #f2f2f2; }
.pill { height: 25px; border: 1px solid #bcbcbc; border-radius: 13px; background: linear-gradient(#f6f6f6, #ebebeb); display: flex; align-items: center; }
.val { width: 133px; padding-left: 10px; }
.val input { width: 103px; height: 20px; border: 1px solid #666; background: #fff; padding: 0 3px; margin-right: 2px; }
.val button { flex: 1; height: 23px; border-left: 1px solid #999; padding-left: 3px; }
.ok { width: 64px; }
.ok button { flex: 1; height: 23px; display: flex; align-items: center; justify-content: center; }
.ok button + button { border-left: 1px solid #bcbcbc; }
.opt { width: 47px; justify-content: center; gap: 7px; }
.opt .c6 { fill: #666; }
```
